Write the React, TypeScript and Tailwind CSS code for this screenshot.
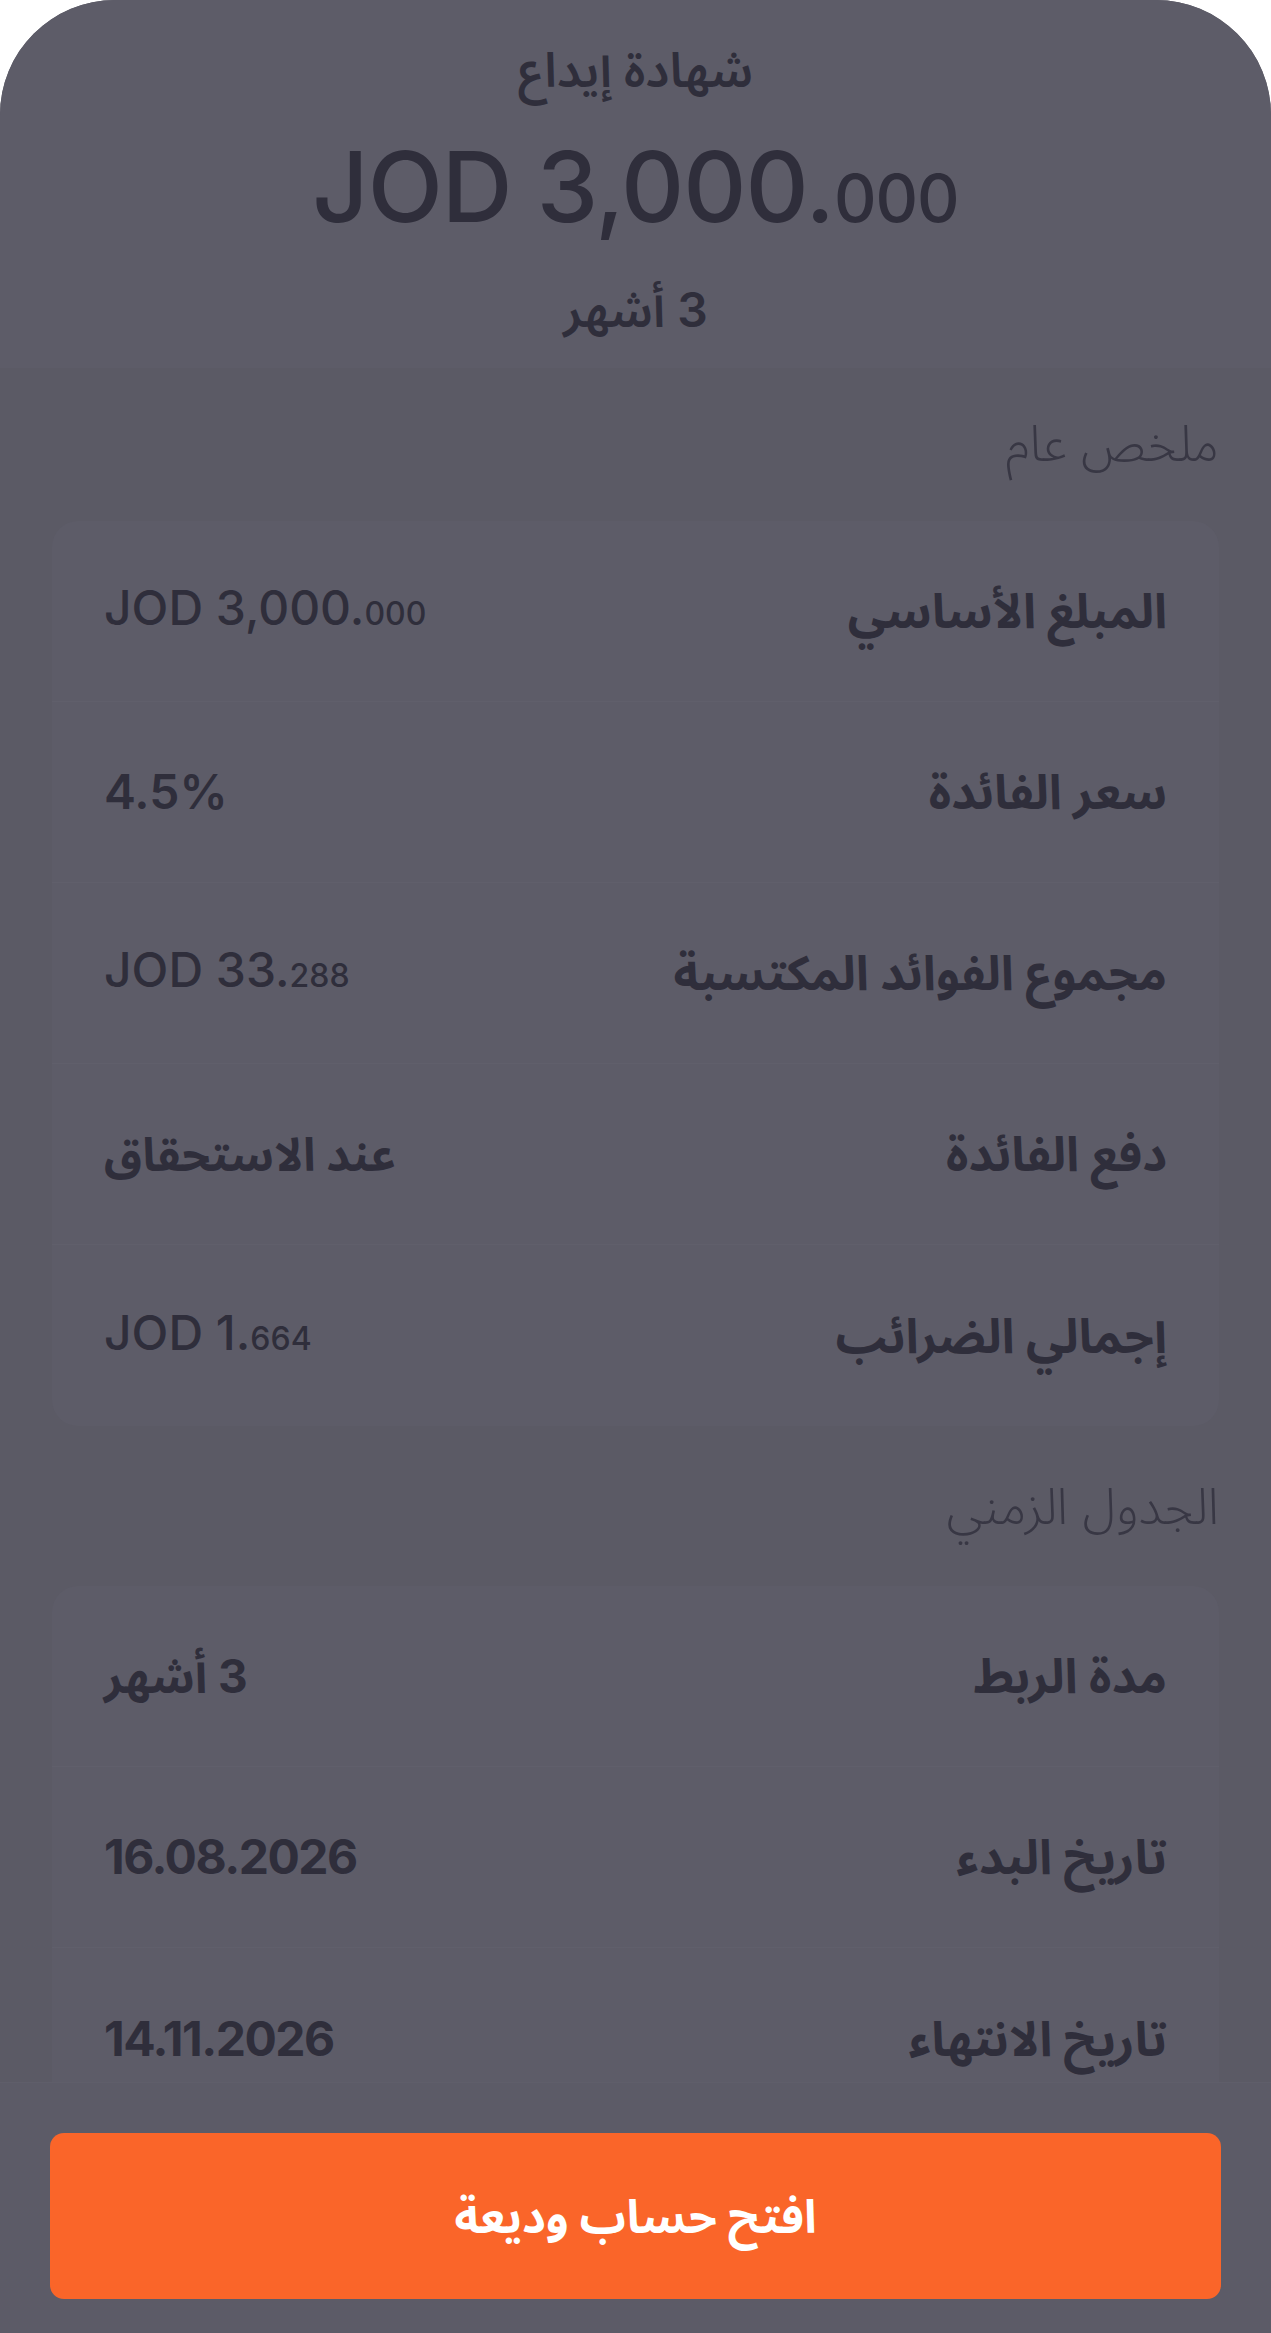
import React from "react";

type Row = {
  label: string;
  value: React.ReactNode;
};

function Amount({ whole, frac, small }: { whole: string; frac: string; small: string }) {
  return (
    <span dir="ltr" className="whitespace-nowrap">
      {whole}.<span className={small}>{frac}</span>
    </span>
  );
}

const summary: Row[] = [
  {
    label: "المبلغ الأساسي",
    value: <Amount whole="JOD 3,000" frac="000" small="text-[32px]" />,
  },
  { label: "سعر الفائدة", value: <span dir="ltr" className="font-semibold">4.5%</span> },
  {
    label: "مجموع الفوائد المكتسبة",
    value: <Amount whole="JOD 33" frac="288" small="text-[32px]" />,
  },
  { label: "دفع الفائدة", value: <span className="text-[46px] font-bold">عند الاستحقاق</span> },
  {
    label: "إجمالي الضرائب",
    value: <Amount whole="JOD 1" frac="664" small="text-[32px]" />,
  },
];

const timeline: Row[] = [
  { label: "مدة الربط", value: <span className="text-[46px] font-bold">3 أشهر</span> },
  { label: "تاريخ البدء", value: <span dir="ltr" className="font-bold tracking-[-1.5px]">16.08.2026</span> },
  { label: "تاريخ الانتهاء", value: <span dir="ltr" className="font-bold tracking-[-1.5px]">14.11.2026</span> },
];

function Card({ rows }: { rows: Row[] }) {
  return (
    <div className="rounded-[26px] bg-[#5d5c68]">
      {rows.map((row) => (
        <div
          key={row.label}
          className="flex h-[181px] items-center justify-between border-b border-[#605f6b] px-[52px] last:border-b-0"
        >
          <span className="text-[48px] font-bold leading-[60px]">{row.label}</span>
          <span className="text-[48px] font-medium leading-[60px]">{row.value}</span>
        </div>
      ))}
    </div>
  );
}

export default function App() {
  return (
    <div className="min-h-[2333px] w-full bg-white">
      <div
        dir="rtl"
        className="flex h-[2333px] flex-col overflow-hidden rounded-t-[115px] bg-[#5b5a65] font-['Inter','Noto_Sans_Arabic','DejaVu_Sans',sans-serif] text-[#2f2e3b]"
      >
        {/* Header */}
        <header className="flex h-[368px] shrink-0 flex-col items-center bg-[#5d5c68] pt-[40px]">
          <div className="text-[48px] font-semibold leading-[60px]">شهادة إيداع</div>
          <div dir="ltr" className="mt-[27px] text-[98px] font-medium leading-[120px] tracking-[-1px]">
            JOD 3,000.<span className="text-[66px]">000</span>
          </div>
          <div className="mt-[22px] text-[48px] font-semibold leading-[60px]">3 أشهر</div>
        </header>

        {/* Details */}
        <main className="flex-1 overflow-hidden px-[52px]">
          <h2 className="mt-[40px] text-[50px] font-light leading-[70px] text-[#383744]">ملخص عام</h2>
          <div className="mt-[43px]">
            <Card rows={summary} />
          </div>

          <h2 className="mt-[45px] text-[50px] font-light leading-[70px] text-[#383744]">الجدول الزمني</h2>
          <div className="mt-[45px]">
            <Card rows={timeline} />
          </div>
        </main>

        {/* Bottom action */}
        <footer className="h-[251px] shrink-0 border-t border-[#5f5e6a] bg-[#5c5b67] px-[50px] pt-[50px]">
          <button className="flex h-[166px] w-full items-center justify-center rounded-[14px] bg-[#fa6529] text-[46px] font-bold text-white">
            افتح حساب وديعة
          </button>
        </footer>
      </div>
    </div>
  );
}
